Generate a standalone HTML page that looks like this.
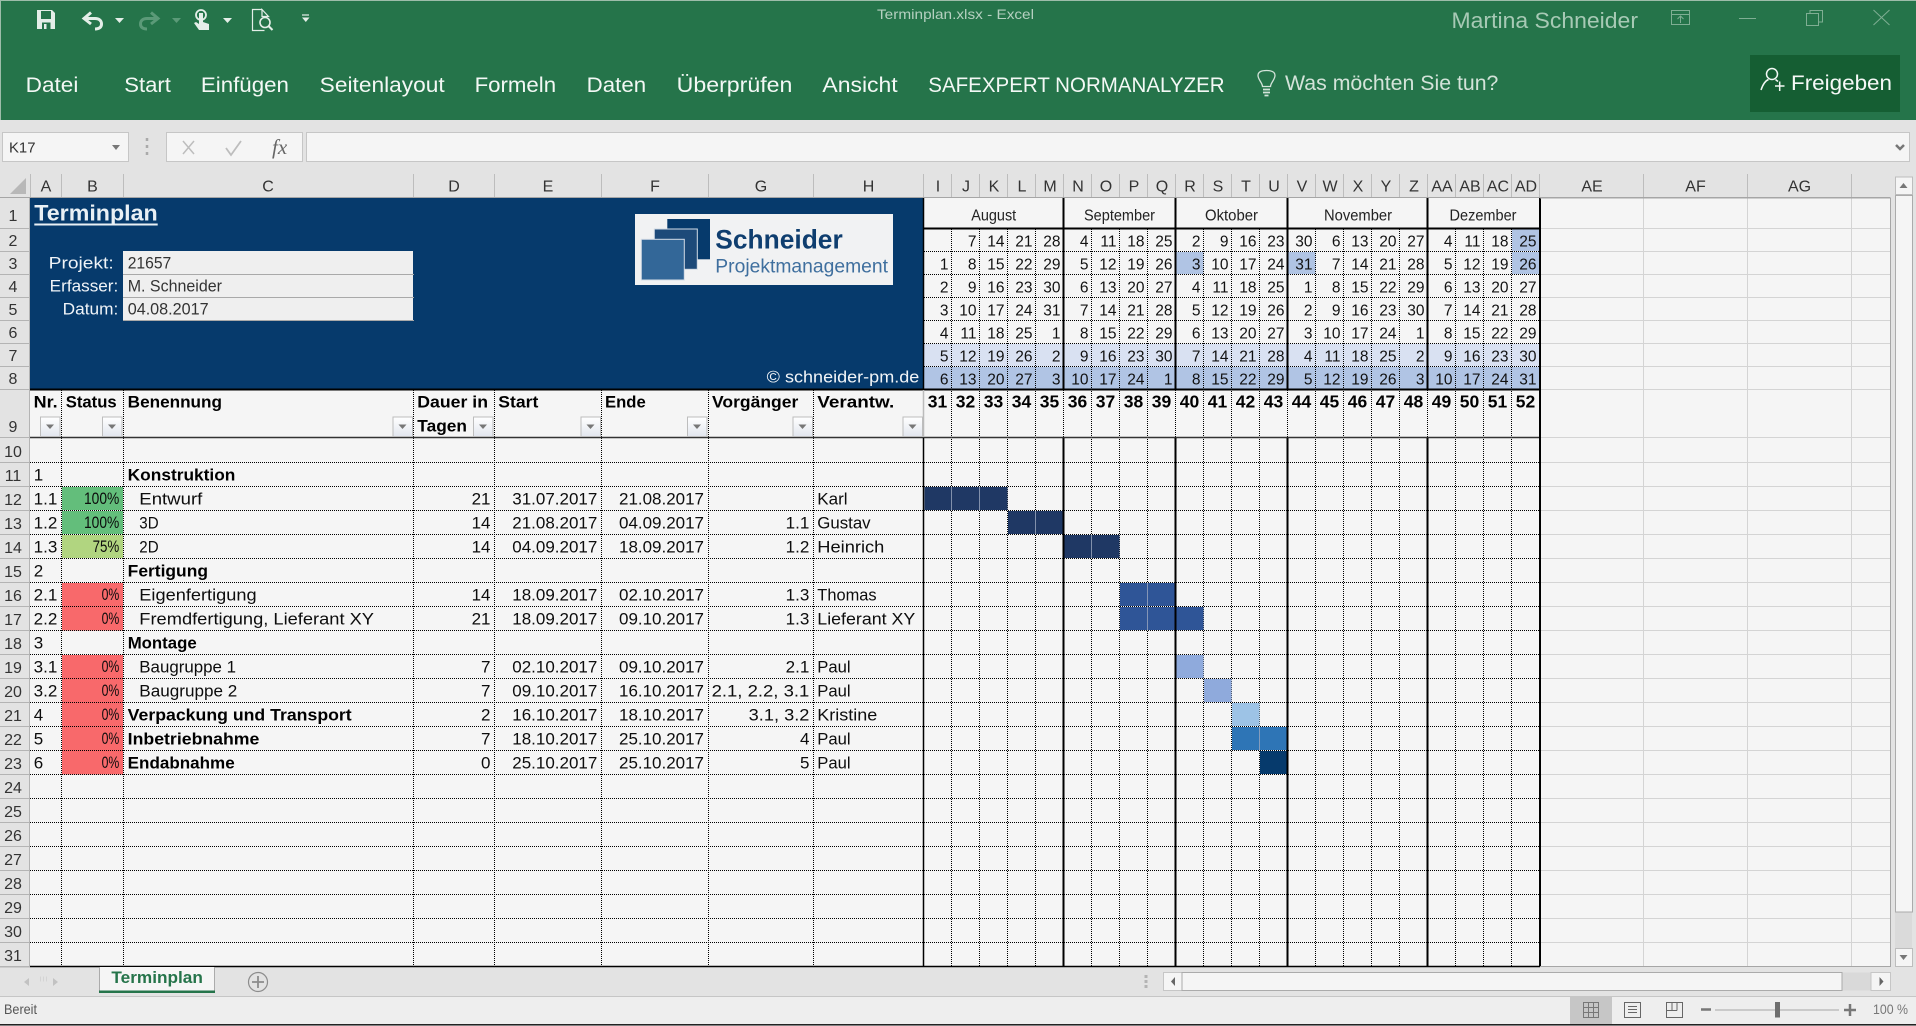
<!DOCTYPE html>
<html><head><meta charset="utf-8"><title>Terminplan.xlsx - Excel</title>
<style>
html,body{margin:0;padding:0;background:#e3e3e3;overflow:hidden}
svg{display:block;font-family:"Liberation Sans",sans-serif}
.tab{font-size:21.500px;fill:#f3f8f5}
.ch{font-size:16px;fill:#333;text-anchor:middle}
.rh{font-size:16px;fill:#333;text-anchor:middle}
.t{font-size:17px;fill:#0c0c0c}
.b{font-size:17px;fill:#000;font-weight:bold}
.r{text-anchor:end}
.c{font-size:15.500px;fill:#111;text-anchor:end}
.w{font-size:17.500px;font-weight:bold;fill:#000;text-anchor:middle}
.m{font-size:15.500px;fill:#222;text-anchor:middle}
.l{font-size:17px;fill:#f0f4f8}
</style></head><body>
<svg width="1916" height="1026" viewBox="0 0 1916 1026" xmlns="http://www.w3.org/2000/svg">
<rect width="1916" height="1026" fill="#e3e3e3"/>
<rect width="1916" height="120" fill="#25744a"/>
<path d="M0 .5H1916M.5 0V120" stroke="#9dbdaa" fill="none"/>
<path d="M37 10h15l3 3v16H37z" fill="#e4eee8"/>
<rect x="41" y="11" width="10" height="8" fill="#25744a"/>
<rect x="42" y="22.500" width="8.500" height="6.500" fill="#25744a"/><rect x="44" y="24" width="2.500" height="5" fill="#e4eee8"/>
<path d="M91 12.500 84 18.500 91 24M85 18.500H95C99.500 18.500 101.500 21 101.500 24S99.500 29 95 29" fill="none" stroke="#e4eee8" stroke-width="3"/>
<path d="M115 18h9l-4.500 5z" fill="#e4eee8"/>
<path d="M151 12.500 158 18.500 151 24M157 18.500H147C142.500 18.500 140.500 21 140.500 24S142.500 29 147 29" fill="none" stroke="#5b9a78" stroke-width="3"/>
<path d="M172 18h9l-4.500 5z" fill="#5b9a78"/>
<circle cx="201" cy="15" r="5" fill="none" stroke="#e4eee8" stroke-width="1.800"/>
<path d="M199 13h4v9l6 2v6H199l-5-7 2-1 3 2z" fill="#e4eee8"/>
<path d="M223 18h9l-4.500 5z" fill="#e4eee8"/>
<path d="M262 9.500h-9.500v21h12M262 9.500l6.500 7h-6.500z" fill="none" stroke="#e4eee8" stroke-width="1.200"/>
<circle cx="265" cy="22.500" r="5" fill="none" stroke="#e4eee8" stroke-width="1.600"/>
<path d="M268.500 26l4 4" stroke="#e4eee8" stroke-width="2"/>
<path d="M302 15h7" stroke="#e4eee8" stroke-width="1.200"/><path d="M302 17.500h7.500l-3.700 4.500z" fill="#e4eee8"/>
<text x="877" y="19" font-size="14" fill="#b5d0c0" textLength="157" lengthAdjust="spacingAndGlyphs">Terminplan.xlsx  -  Excel</text>
<text x="1451.500" y="28" font-size="22" fill="#a7c9b5" textLength="186.500" lengthAdjust="spacingAndGlyphs">Martina Schneider</text>
<g fill="none" stroke="#7fae93" stroke-width="1">
<rect x="1671.500" y="10.500" width="18" height="14"/><path d="M1671.500 14.500h18M1680.500 23v-7M1677.500 19l3-3 3 3"/>
<path d="M1739 18.500h17"/>
<rect x="1806.500" y="13.500" width="12" height="12"/><path d="M1810 13.500V10.500h12.500V22H1818.500"/>
<path d="M1873.500 10 1889.500 25M1889.500 10 1873.500 25"/>
</g>
<text class="tab" x="25.700" y="92" textLength="52.700" lengthAdjust="spacingAndGlyphs">Datei</text>
<text class="tab" x="124.300" y="92" textLength="46.600" lengthAdjust="spacingAndGlyphs">Start</text>
<text class="tab" x="200.900" y="92" textLength="88" lengthAdjust="spacingAndGlyphs">Einfügen</text>
<text class="tab" x="319.700" y="92" textLength="125" lengthAdjust="spacingAndGlyphs">Seitenlayout</text>
<text class="tab" x="474.600" y="92" textLength="81.500" lengthAdjust="spacingAndGlyphs">Formeln</text>
<text class="tab" x="586.700" y="92" textLength="59.400" lengthAdjust="spacingAndGlyphs">Daten</text>
<text class="tab" x="676.700" y="92" textLength="115.700" lengthAdjust="spacingAndGlyphs">Überprüfen</text>
<text class="tab" x="822.400" y="92" textLength="75.300" lengthAdjust="spacingAndGlyphs">Ansicht</text>
<text class="tab" x="928.300" y="92" textLength="296.300" lengthAdjust="spacingAndGlyphs">SAFEXPERT NORMANALYZER</text>
<path d="M1262.500 86.500C1262.500 83 1258 79.500 1258 75.500C1258 72 1261 70.500 1266.500 70.500S1275 72 1275 75.500C1275 79.500 1270.500 83 1270.500 86.500z" fill="none" stroke="#d3e3d9" stroke-width="1.300"/>
<path d="M1263 89.500h7M1263 92.500h7M1264.500 95.500h4" fill="none" stroke="#d3e3d9" stroke-width="1.800"/>
<text x="1285" y="90" font-size="21.500" fill="#d3e3d9" textLength="213.400" lengthAdjust="spacingAndGlyphs">Was möchten Sie tun?</text>
<rect x="1750" y="55" width="150" height="57" fill="#155e33"/>
<circle cx="1772" cy="74" r="5.500" fill="none" stroke="#f3f8f5" stroke-width="1.500"/>
<path d="M1761 90C1763 84 1766 80.500 1768.500 79.500M1775.500 79.500 1778 81.500M1775 86h9.500M1779.700 81.500v9.500" fill="none" stroke="#f3f8f5" stroke-width="1.500"/>
<text x="1791" y="90" font-size="21.500" fill="#f6f9f7" textLength="101" lengthAdjust="spacingAndGlyphs">Freigeben</text>

<g fill="#f5f5f5" stroke="#c6c6c6">
<rect x="2.500" y="132.500" width="126" height="29"/>
<rect x="166.500" y="132.500" width="136" height="29"/>
<rect x="306.500" y="132.500" width="1603" height="29"/>
</g>
<text x="9" y="152.500" font-size="15" fill="#333" textLength="26.500" lengthAdjust="spacingAndGlyphs">K17</text>
<path d="M112 145h8l-4 5z" fill="#777"/>
<path d="M147 138v3M147 145v3M147 152v3" stroke="#aaa" stroke-width="2.500" fill="none"/>
<path d="M183 141l11 13M194 141l-11 13" stroke="#bdbdbd" stroke-width="1.500" fill="none"/>
<path d="M226 148l5 7 10-14" stroke="#bdbdbd" stroke-width="1.800" fill="none"/>
<text x="272" y="154" font-family="Liberation Serif,serif" font-style="italic" font-size="21" fill="#666">fx</text>
<path d="M1896 145l4 4 4-4" stroke="#777" stroke-width="2.500" fill="none"/>

<rect x="0" y="174" width="1890" height="24" fill="#e3e3e3"/>
<path d="M26 178V194H10z" fill="#b8b8b8"/>
<path d="M30.500 174V197M61.500 174V197M123.500 174V197M413.500 174V197M494.500 174V197M601.500 174V197M708.500 174V197M813.500 174V197M923.500 174V197M951.500 174V197M979.500 174V197M1007.500 174V197M1035.500 174V197M1063.500 174V197M1091.500 174V197M1119.500 174V197M1147.500 174V197M1175.500 174V197M1203.500 174V197M1231.500 174V197M1259.500 174V197M1287.500 174V197M1315.500 174V197M1343.500 174V197M1371.500 174V197M1399.500 174V197M1427.500 174V197M1455.500 174V197M1483.500 174V197M1511.500 174V197M1539.500 174V197M1643.500 174V197M1747.500 174V197M1851.500 174V197" stroke="#bdbdbd" fill="none"/>
<path d="M0 197.500H1890" stroke="#a6a6a6"/>
<g>
<text class="ch" x="46" y="191.500">A</text><text class="ch" x="92.500" y="191.500">B</text><text class="ch" x="268" y="191.500">C</text><text class="ch" x="454" y="191.500">D</text><text class="ch" x="548" y="191.500">E</text><text class="ch" x="655" y="191.500">F</text><text class="ch" x="761" y="191.500">G</text><text class="ch" x="868.500" y="191.500">H</text>
<text class="ch" x="938" y="191.500">I</text><text class="ch" x="966" y="191.500">J</text><text class="ch" x="994" y="191.500">K</text><text class="ch" x="1022" y="191.500">L</text><text class="ch" x="1050" y="191.500">M</text><text class="ch" x="1078" y="191.500">N</text><text class="ch" x="1106" y="191.500">O</text><text class="ch" x="1134" y="191.500">P</text><text class="ch" x="1162" y="191.500">Q</text><text class="ch" x="1190" y="191.500">R</text><text class="ch" x="1218" y="191.500">S</text><text class="ch" x="1246" y="191.500">T</text><text class="ch" x="1274" y="191.500">U</text><text class="ch" x="1302" y="191.500">V</text><text class="ch" x="1330" y="191.500">W</text><text class="ch" x="1358" y="191.500">X</text><text class="ch" x="1386" y="191.500">Y</text><text class="ch" x="1414" y="191.500">Z</text><text class="ch" x="1442" y="191.500">AA</text><text class="ch" x="1470" y="191.500">AB</text><text class="ch" x="1498" y="191.500">AC</text><text class="ch" x="1526" y="191.500">AD</text><text class="ch" x="1592" y="191.500">AE</text><text class="ch" x="1695.500" y="191.500">AF</text><text class="ch" x="1799.500" y="191.500">AG</text>
</g>

<rect x="30" y="198" width="1860" height="769" fill="#f5f5f5"/>
<rect x="0" y="198" width="30" height="769" fill="#e3e3e3"/>
<path d="M0 228.500H30M0 251.500H30M0 274.500H30M0 297.500H30M0 320.500H30M0 343.500H30M0 366.500H30M0 389.500H30M0 437.500H30M0 462.500H30M0 486.500H30M0 510.500H30M0 534.500H30M0 558.500H30M0 582.500H30M0 606.500H30M0 630.500H30M0 654.500H30M0 678.500H30M0 702.500H30M0 726.500H30M0 750.500H30M0 774.500H30M0 798.500H30M0 822.500H30M0 846.500H30M0 870.500H30M0 894.500H30M0 918.500H30M0 942.500H30M0 966.500H30M29.500 198V967" stroke="#b4b4b4" fill="none"/>
<g>
<text class="rh" x="13" y="221">1</text><text class="rh" x="13" y="246">2</text><text class="rh" x="13" y="269">3</text><text class="rh" x="13" y="292">4</text><text class="rh" x="13" y="315">5</text><text class="rh" x="13" y="338">6</text><text class="rh" x="13" y="361">7</text><text class="rh" x="13" y="384">8</text><text class="rh" x="13" y="432">9</text><text class="rh" x="13" y="457">10</text><text class="rh" x="13" y="481">11</text><text class="rh" x="13" y="505">12</text><text class="rh" x="13" y="529">13</text><text class="rh" x="13" y="553">14</text><text class="rh" x="13" y="577">15</text><text class="rh" x="13" y="601">16</text><text class="rh" x="13" y="625">17</text><text class="rh" x="13" y="649">18</text><text class="rh" x="13" y="673">19</text><text class="rh" x="13" y="697">20</text><text class="rh" x="13" y="721">21</text><text class="rh" x="13" y="745">22</text><text class="rh" x="13" y="769">23</text><text class="rh" x="13" y="793">24</text><text class="rh" x="13" y="817">25</text><text class="rh" x="13" y="841">26</text><text class="rh" x="13" y="865">27</text><text class="rh" x="13" y="889">28</text><text class="rh" x="13" y="913">29</text><text class="rh" x="13" y="937">30</text><text class="rh" x="13" y="961">31</text>
</g>

<rect x="30" y="198" width="893" height="191" fill="#063a6c"/>
<text x="34.300" y="220.500" font-size="22.500" font-weight="bold" fill="#e9f0f5" textLength="123.400" lengthAdjust="spacingAndGlyphs">Terminplan</text>
<rect x="34.300" y="223.500" width="123.400" height="2" fill="#e9f0f5"/>
<text class="l" x="48.700" y="268.700" textLength="65" lengthAdjust="spacingAndGlyphs">Projekt:</text>
<text class="l" x="49.700" y="291.700" textLength="68.600" lengthAdjust="spacingAndGlyphs">Erfasser:</text>
<text class="l" x="62.700" y="314.700" textLength="55.600" lengthAdjust="spacingAndGlyphs">Datum:</text>
<rect x="123" y="251" width="290" height="69.500" fill="#efefef"/>
<path d="M123 274.500H414M123 297.500H414M123 320.500H414" stroke="#a9a9a9"/>
<text class="t" x="127.700" y="268.700" style="fill:#333" textLength="43.600" lengthAdjust="spacingAndGlyphs">21657</text>
<text class="t" x="127.700" y="291.700" style="fill:#333" textLength="94.300" lengthAdjust="spacingAndGlyphs">M. Schneider</text>
<text class="t" x="127.700" y="314.700" style="fill:#333" textLength="81" lengthAdjust="spacingAndGlyphs">04.08.2017</text>
<rect x="635" y="214" width="258" height="71" fill="#f1f2f3"/>
<rect x="667.300" y="219" width="42.700" height="40.300" fill="#063a6c"/>
<rect x="654.300" y="229" width="43" height="40.300" fill="#1d4a79" stroke="#d4dce6"/>
<rect x="641.300" y="239.300" width="43" height="40.700" fill="#336798" stroke="#d4dce6"/>
<text x="715.300" y="248.300" font-size="27" font-weight="bold" fill="#0f3e6f" textLength="127.400" lengthAdjust="spacingAndGlyphs">Schneider</text>
<text x="715.300" y="272.700" font-size="19" fill="#3f6f9e" textLength="172.700" lengthAdjust="spacingAndGlyphs">Projektmanagement</text>
<text x="766.700" y="382.700" font-size="17" fill="#f2f5f8" textLength="152.600" lengthAdjust="spacingAndGlyphs">© schneider-pm.de</text>

<rect x="924" y="344" width="616" height="22.500" fill="#d9e1f2"/>
<rect x="924" y="367" width="616" height="22" fill="#b0c4e4"/>
<rect x="1176" y="252" width="27.500" height="22" fill="#b0c4e4"/>
<rect x="1288" y="252" width="27.500" height="22" fill="#b0c4e4"/>
<rect x="1512" y="229" width="27.500" height="22" fill="#b0c4e4"/>
<rect x="1512" y="252" width="27.500" height="22" fill="#b0c4e4"/>

<rect x="62" y="487" width="61" height="23" fill="#63be7b"/>
<rect x="62" y="511" width="61" height="23" fill="#63be7b"/>
<rect x="62" y="535" width="61" height="23" fill="#b1d580"/>
<g fill="#f8696b">
<rect x="62" y="583" width="61" height="47.500"/>
<rect x="62" y="655" width="61" height="119.500"/>
</g>

<path d="M1643.500 198V967M1747.500 198V967M1851.500 198V967M1541 228.500H1890M1541 251.500H1890M1541 274.500H1890M1541 297.500H1890M1541 320.500H1890M1541 343.500H1890M1541 366.500H1890M1541 389.500H1890M1541 437.500H1890M1541 462.500H1890M1541 486.500H1890M1541 510.500H1890M1541 534.500H1890M1541 558.500H1890M1541 582.500H1890M1541 606.500H1890M1541 630.500H1890M1541 654.500H1890M1541 678.500H1890M1541 702.500H1890M1541 726.500H1890M1541 750.500H1890M1541 774.500H1890M1541 798.500H1890M1541 822.500H1890M1541 846.500H1890M1541 870.500H1890M1541 894.500H1890M1541 918.500H1890M1541 942.500H1890" stroke="#d4d4d4" fill="none"/>

<g fill="none" stroke="#000" stroke-width="1" stroke-dasharray="1 1">
<path d="M61.500 390V966M123.500 390V966M413.500 390V966M494.500 390V966M601.500 390V966M708.500 390V966M813.500 390V966"/>
<path d="M951.500 229V966M979.500 229V966M1007.500 229V966M1035.500 229V966M1091.500 229V966M1119.500 229V966M1147.500 229V966M1203.500 229V966M1231.500 229V966M1259.500 229V966M1315.500 229V966M1343.500 229V966M1371.500 229V966M1399.500 229V966M1455.500 229V966M1483.500 229V966M1511.500 229V966"/>
<path d="M1063.500 390V437M1175.500 390V437M1287.500 390V437M1427.500 390V437"/>
<path d="M924 251.500H1540M924 274.500H1540M924 297.500H1540M924 320.500H1540M924 343.500H1540M924 366.500H1540"/>
<path d="M30 462.500H1540M30 486.500H1540M30 510.500H1540M30 534.500H1540M30 558.500H1540M30 582.500H1540M30 606.500H1540M30 630.500H1540M30 654.500H1540M30 678.500H1540M30 702.500H1540M30 726.500H1540M30 750.500H1540M30 774.500H1540M30 798.500H1540M30 822.500H1540M30 846.500H1540M30 870.500H1540M30 894.500H1540M30 918.500H1540M30 942.500H1540"/>
</g>

<rect x="924.500" y="487" width="83" height="23" fill="#1f3864"/>
<rect x="1008" y="511" width="55" height="23" fill="#1f3864"/>
<rect x="1064" y="535" width="55.500" height="23" fill="#1f3864"/>
<rect x="1120" y="583" width="55" height="23" fill="#2f5597"/>
<rect x="1120" y="607" width="83.500" height="23" fill="#2f5597"/>
<rect x="1176" y="655" width="27.500" height="23" fill="#8faadc"/>
<rect x="1204" y="679" width="27.500" height="23" fill="#8faadc"/>
<rect x="1232" y="703" width="27.500" height="23" fill="#9dc3e6"/>
<rect x="1232" y="727" width="55" height="23" fill="#2e75b6"/>
<rect x="1260" y="751" width="27" height="23" fill="#063a6c"/>
<path d="M951.500 487V510M979.500 487V510M1035.500 511V534M1091.500 535V558M1147.500 583V630M1175.500 607V630M1259.500 727V750" stroke="#9aa6bd" stroke-width=".8" fill="none"/>

<g fill="none" stroke="#000">
<path d="M924 228.500H1540" stroke-width="2"/>
<path d="M30 389.500H1540" stroke-width="2"/>
<path d="M30 437.500H1540" stroke="#333" stroke-width="1.500"/>
<path d="M923.500 198V389M923.500 438V967" stroke-width="1.500"/>
<path d="M923.500 390V437" stroke="#bbb" stroke-width="1.500"/>
<path d="M1063.500 198V389M1175.500 198V389M1287.500 198V389M1427.500 198V389M1063.500 438V967M1175.500 438V967M1287.500 438V967M1427.500 438V967M1540 198V967" stroke-width="2"/>
<path d="M30 966.500H1540" stroke-width="1.500"/>
<path d="M1540 966.500H1890.500V198H1540" stroke="#a6a6a6" stroke-width="1"/>
</g>

<text class="m" x="993.700" y="220.700" textLength="45" lengthAdjust="spacingAndGlyphs">August</text>
<text class="m" x="1119.500" y="220.700" textLength="71" lengthAdjust="spacingAndGlyphs">September</text>
<text class="m" x="1231.500" y="220.700" textLength="53" lengthAdjust="spacingAndGlyphs">Oktober</text>
<text class="m" x="1358" y="220.700" textLength="68" lengthAdjust="spacingAndGlyphs">November</text>
<text class="m" x="1483" y="220.700" textLength="67" lengthAdjust="spacingAndGlyphs">Dezember</text>

<g transform="translate(0,246.500)">
<text class="c" x="976.500">7</text><text class="c" x="1004.500">14</text><text class="c" x="1032.500">21</text><text class="c" x="1060.500">28</text><text class="c" x="1088.500">4</text><text class="c" x="1116.500">11</text><text class="c" x="1144.500">18</text><text class="c" x="1172.500">25</text><text class="c" x="1200.500">2</text><text class="c" x="1228.500">9</text><text class="c" x="1256.500">16</text><text class="c" x="1284.500">23</text><text class="c" x="1312.500">30</text><text class="c" x="1340.500">6</text><text class="c" x="1368.500">13</text><text class="c" x="1396.500">20</text><text class="c" x="1424.500">27</text><text class="c" x="1452.500">4</text><text class="c" x="1480.500">11</text><text class="c" x="1508.500">18</text><text class="c" x="1536.500">25</text>
</g>
<g transform="translate(0,269.500)">
<text class="c" x="948.500">1</text><text class="c" x="976.500">8</text><text class="c" x="1004.500">15</text><text class="c" x="1032.500">22</text><text class="c" x="1060.500">29</text><text class="c" x="1088.500">5</text><text class="c" x="1116.500">12</text><text class="c" x="1144.500">19</text><text class="c" x="1172.500">26</text><text class="c" x="1200.500">3</text><text class="c" x="1228.500">10</text><text class="c" x="1256.500">17</text><text class="c" x="1284.500">24</text><text class="c" x="1312.500">31</text><text class="c" x="1340.500">7</text><text class="c" x="1368.500">14</text><text class="c" x="1396.500">21</text><text class="c" x="1424.500">28</text><text class="c" x="1452.500">5</text><text class="c" x="1480.500">12</text><text class="c" x="1508.500">19</text><text class="c" x="1536.500">26</text>
</g>
<g transform="translate(0,292.500)">
<text class="c" x="948.500">2</text><text class="c" x="976.500">9</text><text class="c" x="1004.500">16</text><text class="c" x="1032.500">23</text><text class="c" x="1060.500">30</text><text class="c" x="1088.500">6</text><text class="c" x="1116.500">13</text><text class="c" x="1144.500">20</text><text class="c" x="1172.500">27</text><text class="c" x="1200.500">4</text><text class="c" x="1228.500">11</text><text class="c" x="1256.500">18</text><text class="c" x="1284.500">25</text><text class="c" x="1312.500">1</text><text class="c" x="1340.500">8</text><text class="c" x="1368.500">15</text><text class="c" x="1396.500">22</text><text class="c" x="1424.500">29</text><text class="c" x="1452.500">6</text><text class="c" x="1480.500">13</text><text class="c" x="1508.500">20</text><text class="c" x="1536.500">27</text>
</g>
<g transform="translate(0,315.500)">
<text class="c" x="948.500">3</text><text class="c" x="976.500">10</text><text class="c" x="1004.500">17</text><text class="c" x="1032.500">24</text><text class="c" x="1060.500">31</text><text class="c" x="1088.500">7</text><text class="c" x="1116.500">14</text><text class="c" x="1144.500">21</text><text class="c" x="1172.500">28</text><text class="c" x="1200.500">5</text><text class="c" x="1228.500">12</text><text class="c" x="1256.500">19</text><text class="c" x="1284.500">26</text><text class="c" x="1312.500">2</text><text class="c" x="1340.500">9</text><text class="c" x="1368.500">16</text><text class="c" x="1396.500">23</text><text class="c" x="1424.500">30</text><text class="c" x="1452.500">7</text><text class="c" x="1480.500">14</text><text class="c" x="1508.500">21</text><text class="c" x="1536.500">28</text>
</g>
<g transform="translate(0,338.500)">
<text class="c" x="948.500">4</text><text class="c" x="976.500">11</text><text class="c" x="1004.500">18</text><text class="c" x="1032.500">25</text><text class="c" x="1060.500">1</text><text class="c" x="1088.500">8</text><text class="c" x="1116.500">15</text><text class="c" x="1144.500">22</text><text class="c" x="1172.500">29</text><text class="c" x="1200.500">6</text><text class="c" x="1228.500">13</text><text class="c" x="1256.500">20</text><text class="c" x="1284.500">27</text><text class="c" x="1312.500">3</text><text class="c" x="1340.500">10</text><text class="c" x="1368.500">17</text><text class="c" x="1396.500">24</text><text class="c" x="1424.500">1</text><text class="c" x="1452.500">8</text><text class="c" x="1480.500">15</text><text class="c" x="1508.500">22</text><text class="c" x="1536.500">29</text>
</g>
<g transform="translate(0,361.500)">
<text class="c" x="948.500">5</text><text class="c" x="976.500">12</text><text class="c" x="1004.500">19</text><text class="c" x="1032.500">26</text><text class="c" x="1060.500">2</text><text class="c" x="1088.500">9</text><text class="c" x="1116.500">16</text><text class="c" x="1144.500">23</text><text class="c" x="1172.500">30</text><text class="c" x="1200.500">7</text><text class="c" x="1228.500">14</text><text class="c" x="1256.500">21</text><text class="c" x="1284.500">28</text><text class="c" x="1312.500">4</text><text class="c" x="1340.500">11</text><text class="c" x="1368.500">18</text><text class="c" x="1396.500">25</text><text class="c" x="1424.500">2</text><text class="c" x="1452.500">9</text><text class="c" x="1480.500">16</text><text class="c" x="1508.500">23</text><text class="c" x="1536.500">30</text>
</g>
<g transform="translate(0,384.500)">
<text class="c" x="948.500">6</text><text class="c" x="976.500">13</text><text class="c" x="1004.500">20</text><text class="c" x="1032.500">27</text><text class="c" x="1060.500">3</text><text class="c" x="1088.500">10</text><text class="c" x="1116.500">17</text><text class="c" x="1144.500">24</text><text class="c" x="1172.500">1</text><text class="c" x="1200.500">8</text><text class="c" x="1228.500">15</text><text class="c" x="1256.500">22</text><text class="c" x="1284.500">29</text><text class="c" x="1312.500">5</text><text class="c" x="1340.500">12</text><text class="c" x="1368.500">19</text><text class="c" x="1396.500">26</text><text class="c" x="1424.500">3</text><text class="c" x="1452.500">10</text><text class="c" x="1480.500">17</text><text class="c" x="1508.500">24</text><text class="c" x="1536.500">31</text>
</g>

<g transform="translate(0,407.700)">
<text class="w" x="937.500">31</text><text class="w" x="965.500">32</text><text class="w" x="993.500">33</text><text class="w" x="1021.500">34</text><text class="w" x="1049.500">35</text><text class="w" x="1077.500">36</text><text class="w" x="1105.500">37</text><text class="w" x="1133.500">38</text><text class="w" x="1161.500">39</text><text class="w" x="1189.500">40</text><text class="w" x="1217.500">41</text><text class="w" x="1245.500">42</text><text class="w" x="1273.500">43</text><text class="w" x="1301.500">44</text><text class="w" x="1329.500">45</text><text class="w" x="1357.500">46</text><text class="w" x="1385.500">47</text><text class="w" x="1413.500">48</text><text class="w" x="1441.500">49</text><text class="w" x="1469.500">50</text><text class="w" x="1497.500">51</text><text class="w" x="1525.500">52</text>
</g>

<text class="b" x="33.700" y="407.700" textLength="24" lengthAdjust="spacingAndGlyphs">Nr.</text>
<text class="b" x="65.700" y="407.700" textLength="51" lengthAdjust="spacingAndGlyphs">Status</text>
<text class="b" x="127.700" y="407.700" textLength="94.300" lengthAdjust="spacingAndGlyphs">Benennung</text>
<text class="b" x="417.300" y="407.700" textLength="70.700" lengthAdjust="spacingAndGlyphs">Dauer in</text>
<text class="b" x="417.300" y="431.700" textLength="49.700" lengthAdjust="spacingAndGlyphs">Tagen</text>
<text class="b" x="498.300" y="407.700" textLength="40" lengthAdjust="spacingAndGlyphs">Start</text>
<text class="b" x="605" y="407.700" textLength="40.700" lengthAdjust="spacingAndGlyphs">Ende</text>
<text class="b" x="712" y="407.700" textLength="86.300" lengthAdjust="spacingAndGlyphs">Vorgänger</text>
<text class="b" x="817.300" y="407.700" textLength="77" lengthAdjust="spacingAndGlyphs">Verantw.</text>

<defs>
<linearGradient id="fb" x1="0" y1="0" x2="0" y2="1"><stop offset="0" stop-color="#fff"/><stop offset="1" stop-color="#e2e6ee"/></linearGradient>
<g id="f"><rect x=".5" y=".5" width="19.500" height="19.500" fill="url(#fb)" stroke="#bdbdbd"/><path d="M6 8h8l-4 4.500z" fill="#777"/></g>
</defs>
<use href="#f" x="40" y="416.500"/><use href="#f" x="102" y="416.500"/><use href="#f" x="392.500" y="416.500"/><use href="#f" x="473" y="416.500"/><use href="#f" x="580.500" y="416.500"/><use href="#f" x="687" y="416.500"/><use href="#f" x="792.500" y="416.500"/><use href="#f" x="902.500" y="416.500"/>

<text class="t" x="33.700" y="480.500">1</text>
<text class="t" x="33.700" y="504.500" textLength="23.700" lengthAdjust="spacingAndGlyphs">1.1</text>
<text class="t" x="33.700" y="528.500" textLength="23.700" lengthAdjust="spacingAndGlyphs">1.2</text>
<text class="t" x="33.700" y="552.500" textLength="23.700" lengthAdjust="spacingAndGlyphs">1.3</text>
<text class="t" x="33.700" y="576.500">2</text>
<text class="t" x="33.700" y="600.500" textLength="23.700" lengthAdjust="spacingAndGlyphs">2.1</text>
<text class="t" x="33.700" y="624.500" textLength="23.700" lengthAdjust="spacingAndGlyphs">2.2</text>
<text class="t" x="33.700" y="648.500">3</text>
<text class="t" x="33.700" y="672.500" textLength="23.700" lengthAdjust="spacingAndGlyphs">3.1</text>
<text class="t" x="33.700" y="696.500" textLength="23.700" lengthAdjust="spacingAndGlyphs">3.2</text>
<text class="t" x="33.700" y="720.500">4</text>
<text class="t" x="33.700" y="744.500">5</text>
<text class="t" x="33.700" y="768.500">6</text>

<text class="t" x="84" y="504" textLength="35.300" lengthAdjust="spacingAndGlyphs">100%</text>
<text class="t" x="84" y="528" textLength="35.300" lengthAdjust="spacingAndGlyphs">100%</text>
<text class="t" x="92.600" y="552" textLength="26.700" lengthAdjust="spacingAndGlyphs">75%</text>
<text class="t" x="101.600" y="600" textLength="17.700" lengthAdjust="spacingAndGlyphs">0%</text>
<text class="t" x="101.600" y="624" textLength="17.700" lengthAdjust="spacingAndGlyphs">0%</text>
<text class="t" x="101.600" y="672" textLength="17.700" lengthAdjust="spacingAndGlyphs">0%</text>
<text class="t" x="101.600" y="696" textLength="17.700" lengthAdjust="spacingAndGlyphs">0%</text>
<text class="t" x="101.600" y="720" textLength="17.700" lengthAdjust="spacingAndGlyphs">0%</text>
<text class="t" x="101.600" y="744" textLength="17.700" lengthAdjust="spacingAndGlyphs">0%</text>
<text class="t" x="101.600" y="768" textLength="17.700" lengthAdjust="spacingAndGlyphs">0%</text>

<text class="b" x="127.700" y="480.500" textLength="107.700" lengthAdjust="spacingAndGlyphs">Konstruktion</text>
<text class="t" x="139.300" y="504.500" textLength="63" lengthAdjust="spacingAndGlyphs">Entwurf</text>
<text class="t" x="139.300" y="528.500" textLength="19.300" lengthAdjust="spacingAndGlyphs">3D</text>
<text class="t" x="139.300" y="552.500" textLength="19.300" lengthAdjust="spacingAndGlyphs">2D</text>
<text class="b" x="127.700" y="576.500" textLength="80.300" lengthAdjust="spacingAndGlyphs">Fertigung</text>
<text class="t" x="139.300" y="600.500" textLength="117.300" lengthAdjust="spacingAndGlyphs">Eigenfertigung</text>
<text class="t" x="139.300" y="624.500" textLength="234.700" lengthAdjust="spacingAndGlyphs">Fremdfertigung, Lieferant XY</text>
<text class="b" x="127.700" y="648.500" textLength="69" lengthAdjust="spacingAndGlyphs">Montage</text>
<text class="t" x="139.300" y="672.500" textLength="96.700" lengthAdjust="spacingAndGlyphs">Baugruppe 1</text>
<text class="t" x="139.300" y="696.500" textLength="98" lengthAdjust="spacingAndGlyphs">Baugruppe 2</text>
<text class="b" x="127.700" y="720.500" textLength="224" lengthAdjust="spacingAndGlyphs">Verpackung und Transport</text>
<text class="b" x="127.700" y="744.500" textLength="131.700" lengthAdjust="spacingAndGlyphs">Inbetriebnahme</text>
<text class="b" x="127.700" y="768.500" textLength="107" lengthAdjust="spacingAndGlyphs">Endabnahme</text>

<text class="t r" x="490.500" y="504.500">21</text><text class="t r" x="490.500" y="528.500">14</text><text class="t r" x="490.500" y="552.500">14</text><text class="t r" x="490.500" y="600.500">14</text><text class="t r" x="490.500" y="624.500">21</text><text class="t r" x="490.500" y="672.500">7</text><text class="t r" x="490.500" y="696.500">7</text><text class="t r" x="490.500" y="720.500">2</text><text class="t r" x="490.500" y="744.500">7</text><text class="t r" x="490.500" y="768.500">0</text>

<text class="t" x="512.300" y="504.500" textLength="85" lengthAdjust="spacingAndGlyphs">31.07.2017</text>
<text class="t" x="512.300" y="528.500" textLength="85" lengthAdjust="spacingAndGlyphs">21.08.2017</text>
<text class="t" x="512.300" y="552.500" textLength="85" lengthAdjust="spacingAndGlyphs">04.09.2017</text>
<text class="t" x="512.300" y="600.500" textLength="85" lengthAdjust="spacingAndGlyphs">18.09.2017</text>
<text class="t" x="512.300" y="624.500" textLength="85" lengthAdjust="spacingAndGlyphs">18.09.2017</text>
<text class="t" x="512.300" y="672.500" textLength="85" lengthAdjust="spacingAndGlyphs">02.10.2017</text>
<text class="t" x="512.300" y="696.500" textLength="85" lengthAdjust="spacingAndGlyphs">09.10.2017</text>
<text class="t" x="512.300" y="720.500" textLength="85" lengthAdjust="spacingAndGlyphs">16.10.2017</text>
<text class="t" x="512.300" y="744.500" textLength="85" lengthAdjust="spacingAndGlyphs">18.10.2017</text>
<text class="t" x="512.300" y="768.500" textLength="85" lengthAdjust="spacingAndGlyphs">25.10.2017</text>

<text class="t" x="619" y="504.500" textLength="85" lengthAdjust="spacingAndGlyphs">21.08.2017</text>
<text class="t" x="619" y="528.500" textLength="85" lengthAdjust="spacingAndGlyphs">04.09.2017</text>
<text class="t" x="619" y="552.500" textLength="85" lengthAdjust="spacingAndGlyphs">18.09.2017</text>
<text class="t" x="619" y="600.500" textLength="85" lengthAdjust="spacingAndGlyphs">02.10.2017</text>
<text class="t" x="619" y="624.500" textLength="85" lengthAdjust="spacingAndGlyphs">09.10.2017</text>
<text class="t" x="619" y="672.500" textLength="85" lengthAdjust="spacingAndGlyphs">09.10.2017</text>
<text class="t" x="619" y="696.500" textLength="85" lengthAdjust="spacingAndGlyphs">16.10.2017</text>
<text class="t" x="619" y="720.500" textLength="85" lengthAdjust="spacingAndGlyphs">18.10.2017</text>
<text class="t" x="619" y="744.500" textLength="85" lengthAdjust="spacingAndGlyphs">25.10.2017</text>
<text class="t" x="619" y="768.500" textLength="85" lengthAdjust="spacingAndGlyphs">25.10.2017</text>

<text class="t" x="785.700" y="528.500" textLength="23.700" lengthAdjust="spacingAndGlyphs">1.1</text>
<text class="t" x="785.700" y="552.500" textLength="23.700" lengthAdjust="spacingAndGlyphs">1.2</text>
<text class="t" x="785.700" y="600.500" textLength="23.700" lengthAdjust="spacingAndGlyphs">1.3</text>
<text class="t" x="785.700" y="624.500" textLength="23.700" lengthAdjust="spacingAndGlyphs">1.3</text>
<text class="t" x="785.700" y="672.500" textLength="23.700" lengthAdjust="spacingAndGlyphs">2.1</text>
<text class="t" x="711.600" y="696.500" textLength="97.700" lengthAdjust="spacingAndGlyphs">2.1, 2.2, 3.1</text>
<text class="t" x="748.700" y="720.500" textLength="60.700" lengthAdjust="spacingAndGlyphs">3.1, 3.2</text>
<text class="t r" x="809.500" y="744.500">4</text>
<text class="t r" x="809.500" y="768.500">5</text>

<text class="t" x="817.300" y="504.500" textLength="30.300" lengthAdjust="spacingAndGlyphs">Karl</text>
<text class="t" x="817.300" y="528.500" textLength="53.300" lengthAdjust="spacingAndGlyphs">Gustav</text>
<text class="t" x="817.300" y="552.500" textLength="67" lengthAdjust="spacingAndGlyphs">Heinrich</text>
<text class="t" x="817.300" y="600.500" textLength="59.300" lengthAdjust="spacingAndGlyphs">Thomas</text>
<text class="t" x="817.300" y="624.500" textLength="98" lengthAdjust="spacingAndGlyphs">Lieferant XY</text>
<text class="t" x="817.300" y="672.500" textLength="33.300" lengthAdjust="spacingAndGlyphs">Paul</text>
<text class="t" x="817.300" y="696.500" textLength="33.300" lengthAdjust="spacingAndGlyphs">Paul</text>
<text class="t" x="817.300" y="720.500" textLength="60" lengthAdjust="spacingAndGlyphs">Kristine</text>
<text class="t" x="817.300" y="744.500" textLength="33.300" lengthAdjust="spacingAndGlyphs">Paul</text>
<text class="t" x="817.300" y="768.500" textLength="33.300" lengthAdjust="spacingAndGlyphs">Paul</text>

<rect x="1895" y="177" width="17" height="790" fill="#dadada"/>
<rect x="1895.500" y="177" width="17" height="17.500" fill="#f5f5f5" stroke="#bdbdbd"/>
<path d="M1899.500 188l4-5 4 5z" fill="#777"/>
<rect x="1895.500" y="195.500" width="17" height="716.500" fill="#f5f5f5" stroke="#ababab"/>
<rect x="1895.500" y="948.500" width="17" height="18" fill="#f5f5f5" stroke="#bdbdbd"/>
<path d="M1899.500 955l4 5 4-5z" fill="#777"/>

<rect x="0" y="967.500" width="1916" height="28.500" fill="#e3e3e3"/>
<path d="M0 967H30" stroke="#b4b4b4"/>
<path d="M29 978v8l-5-4zM53 978v8l5-4z" fill="#c2c2c2"/>
<path d="M40 979h8" stroke="#d4d4d4" stroke-width="5" stroke-dasharray="1 2" fill="none"/>
<rect x="99" y="967" width="115.500" height="26" fill="#f5f5f5"/>
<path d="M99.500 967V992M214.500 967V992" stroke="#ababab" fill="none"/>
<rect x="99" y="990.500" width="116" height="2.500" fill="#25744a"/>
<text x="111.400" y="983" font-size="17" font-weight="bold" fill="#25744a" textLength="91.500" lengthAdjust="spacingAndGlyphs">Terminplan</text>
<circle cx="258" cy="982" r="9.500" fill="none" stroke="#8c8c8c" stroke-width="1.200"/>
<path d="M258 976v12M252 982h12" stroke="#8c8c8c" stroke-width="1.800" fill="none"/>
<path d="M1146 975v3M1146 980v3M1146 985v3" stroke="#b4b4b4" stroke-width="3" fill="none"/>

<rect x="1163.500" y="972.500" width="727" height="18" fill="#d9d9d9"/>
<rect x="1163.500" y="972.500" width="18.500" height="18" fill="#f5f5f5" stroke="#c6c6c6"/>
<path d="M1175 977v9l-4-4.500z" fill="#666"/>
<rect x="1182" y="972.500" width="660" height="18" fill="#f5f5f5" stroke="#ababab"/>
<rect x="1871" y="972.500" width="19.500" height="18" fill="#f5f5f5" stroke="#c6c6c6"/>
<path d="M1879.500 977v9l4-4.500z" fill="#666"/>

<rect x="0" y="996" width="1916" height="28" fill="#eeeeee"/>
<path d="M0 996.500H1916" stroke="#c6c6c6"/>
<rect x="0" y="1024" width="1916" height="1.500" fill="#222"/>
<text x="4" y="1014" font-size="14" fill="#555" textLength="33" lengthAdjust="spacingAndGlyphs">Bereit</text>
<rect x="1570" y="997" width="42" height="27" fill="#c6c6c6"/>
<g fill="none" stroke="#777">
<path d="M1583.500 1002.500h15v15h-15zM1583.500 1007.500h15M1583.500 1012.500h15M1588.500 1002.500v15M1593.500 1002.500v15"/>
<path d="M1624.500 1002.500h16v15h-16zM1628 1006.500h9M1628 1009.500h9M1628 1012.500h9" stroke="#666"/>
<path d="M1666.500 1002.500h16v15h-16zM1666.500 1010.500h10.500M1677 1002.500v8M1672 1002.500v8" stroke="#666"/>
</g>
<path d="M1701 1009.500h10" stroke="#777" stroke-width="2.500"/>
<path d="M1715 1010h124" stroke="#a6a6a6"/>
<rect x="1775" y="1002" width="5" height="15.500" fill="#6e6e6e"/>
<path d="M1844 1010h12M1850 1004v12" stroke="#777" stroke-width="2.500" fill="none"/>
<text x="1873" y="1014" font-size="14" fill="#777" textLength="35" lengthAdjust="spacingAndGlyphs">100 %</text>
</svg>
</body></html>
